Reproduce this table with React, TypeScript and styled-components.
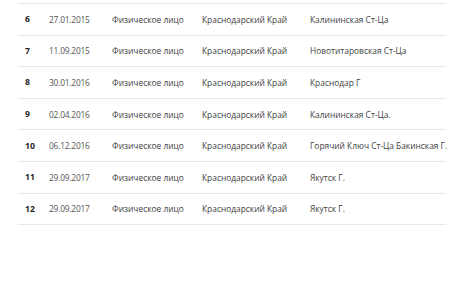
import React from 'react';
import styled, { createGlobalStyle } from 'styled-components';

const Global = createGlobalStyle`
  html, body {
    margin: 0;
    padding: 0;
    background: #ffffff;
  }
`;

const Page = styled.div`
  padding: 3px 10px 0 18px;
  font-family: 'Open Sans', 'Liberation Sans', sans-serif;
  color: #4a4a4a;
`;

const Table = styled.div`
  width: 428px;
  border-bottom: 1px solid #e8e8e8;
`;

const Row = styled.div`
  display: grid;
  grid-template-columns: 24px 63px 90px 108px 1fr;
  align-items: center;
  height: 30.6px;
  padding-left: 7px;
  border-top: 1px solid #e8e8e8;
  font-size: 8.4px;
  white-space: nowrap;
`;

const Num = styled.span`
  font-weight: 700;
  color: #262626;
  font-size: 8.6px;
`;

const Cell = styled.span<{ $muted?: boolean }>`
  color: ${(p) => (p.$muted ? '#555555' : '#404040')};
  letter-spacing: ${(p) => (p.$muted ? '-0.2px' : '0')};
`;

const rows = [
  ['6', '27.01.2015', 'Калининская Ст-Ца'],
  ['7', '11.09.2015', 'Новотитаровская Ст-Ца'],
  ['8', '30.01.2016', 'Краснодар Г'],
  ['9', '02.04.2016', 'Калининская Ст-Ца.'],
  ['10', '06.12.2016', 'Горячий Ключ Ст-Ца Бакинская Г.'],
  ['11', '29.09.2017', 'Якутск Г.'],
  ['12', '29.09.2017', 'Якутск Г.'],
];

export default function App() {
  return (
    <>
      <Global />
      <Page>
        <Table>
          {rows.map(([n, date, city]) => (
            <Row key={n}>
              <Num>{n}</Num>
              <Cell $muted>{date}</Cell>
              <Cell>Физическое лицо</Cell>
              <Cell>Краснодарский Край</Cell>
              <Cell>{city}</Cell>
            </Row>
          ))}
        </Table>
      </Page>
    </>
  );
}
